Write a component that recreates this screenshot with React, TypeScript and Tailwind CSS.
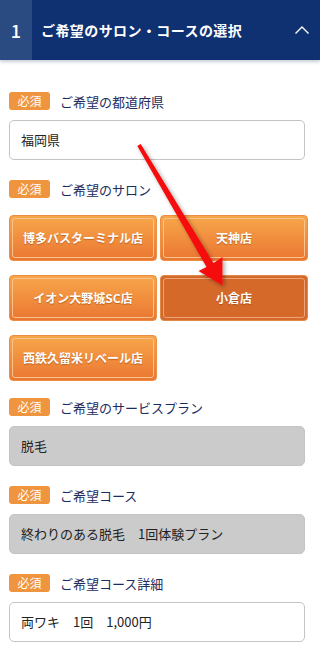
import React from "react";

const font = { fontFamily: '"Noto Sans CJK JP", "Noto Sans", sans-serif' };

function Badge() {
  return (
    <span className="inline-flex h-[18px] w-[41px] items-center justify-center rounded-[3px] bg-[#f0953f] text-[12px] leading-none text-white">
      必須
    </span>
  );
}

function Label({ text }: { text: string }) {
  return (
    <div className="flex h-[18px] items-center gap-[10px]">
      <Badge />
      <span className="text-[13px] leading-none text-[#1d2c5e]">{text}</span>
    </div>
  );
}

function Field({ text, gray }: { text: string; gray?: boolean }) {
  return (
    <div
      className={
        "mt-[10px] flex h-[40px] w-[296px] items-center rounded-[5px] border px-[11px] text-[13px] text-[#222] " +
        (gray ? "border-[#c4c4c4] bg-[#cbcbcb]" : "border-[#c4c4c4] bg-white")
      }
    >
      {text}
    </div>
  );
}

function StoreButton({ text, selected }: { text: string; selected?: boolean }) {
  return (
    <div
      className={
        "h-[46px] rounded-[4px] border p-[2px] " +
        (selected
          ? "border-[#e08a4a] bg-[#d5692a]"
          : "border-[#ec8f42] bg-gradient-to-b from-[#f7a64b] to-[#ea7631]")
      }
    >
      <div
        className={
          "flex h-full items-center justify-center rounded-[3px] border text-[12px] font-bold text-white [text-shadow:0_1px_1px_rgba(120,50,0,0.45)] " +
          (selected ? "border-[#eba47a]" : "border-[#fbc48e]")
        }
      >
        {text}
      </div>
    </div>
  );
}

export default function App() {
  return (
    <div className="relative h-[645px] w-[320px] overflow-hidden bg-white" style={font}>
      <div className="flex h-[60px] bg-[#0f3171] shadow-[0_2px_3px_rgba(40,60,100,0.25)]">
        <div className="flex w-[32px] items-center justify-center bg-[#2a4a82] text-[18px] font-medium text-white">1</div>
        <div className="flex flex-1 items-center pl-[9px] text-[14px] font-bold tracking-[0.03em] text-white">
          ご希望のサロン・コースの選択
        </div>
        <div className="flex w-[36px] items-center justify-center">
          <svg width="16" height="10" viewBox="0 0 16 10">
            <path d="M1.5 8.5 L8 2 L14.5 8.5" fill="none" stroke="white" strokeWidth="1.4" />
          </svg>
        </div>
      </div>

      <div className="px-[9px] pt-[32px]">
        <Label text="ご希望の都道府県" />
        <Field text="福岡県" />

        <div className="mt-[20px]">
          <Label text="ご希望のサロン" />
        </div>
        <div className="mt-[17px] grid w-[299px] grid-cols-2 gap-x-[3px] gap-y-[14px]">
          <StoreButton text="博多バスターミナル店" />
          <StoreButton text="天神店" />
          <StoreButton text="イオン大野城SC店" />
          <StoreButton text="小倉店" selected />
          <StoreButton text="西鉄久留米リベール店" />
        </div>

        <div className="mt-[17px]">
          <Label text="ご希望のサービスプラン" />
        </div>
        <Field text="脱毛" gray />

        <div className="mt-[20px]">
          <Label text="ご希望コース" />
        </div>
        <Field text="終わりのある脱毛　1回体験プラン" gray />

        <div className="mt-[20px]">
          <Label text="ご希望コース詳細" />
        </div>
        <Field text="両ワキ　1回　1,000円" />
      </div>

      <svg
        className="pointer-events-none absolute left-0 top-0"
        width="320"
        height="645"
        viewBox="0 0 320 645"
      >
        <defs>
          <filter id="sh" x="-20%" y="-20%" width="140%" height="140%">
            <feDropShadow dx="2" dy="2" stdDeviation="2" floodColor="#000" floodOpacity="0.35" />
          </filter>
        </defs>
        <path
          d="M137.3 146 L140.7 144 L213.5 263 L222.5 257 L222.5 285.5 L198.5 271 L206.5 267 Z"
          fill="#f50f0f"
          filter="url(#sh)"
        />
      </svg>
    </div>
  );
}
